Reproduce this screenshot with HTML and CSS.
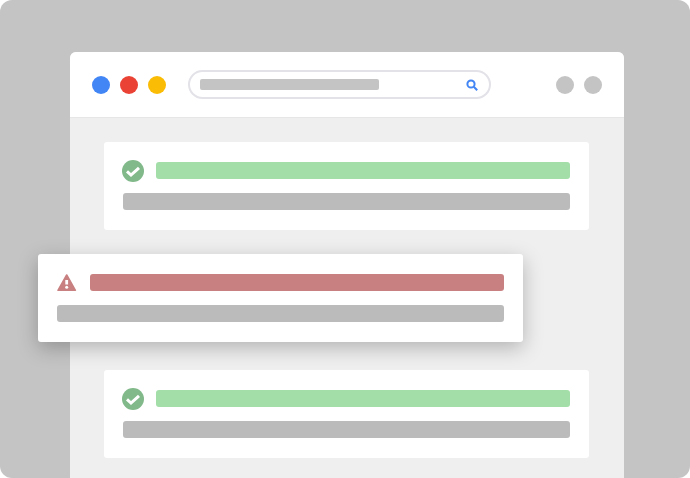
FILE: index.html
```html
<!DOCTYPE html>
<html lang="en">
<head>
    <meta charset="UTF-8">
    <meta name="viewport" content="width=device-width, initial-scale=1.0">
    <title>Browser alerts</title>
    <link rel="stylesheet" href="styles.css">
</head>
<body>
    <div class="browser">
        <div class="toolbar">
            <div class="dots">
                <span class="dot dot-blue"></span>
                <span class="dot dot-red"></span>
                <span class="dot dot-yellow"></span>
            </div>
            <div class="search">
                <span class="search-text"></span>
                <svg class="search-icon" width="12" height="12" viewBox="0 0 12 12" fill="none" stroke="#4285f4">
                    <circle cx="5" cy="5" r="3.6" stroke-width="2"/>
                    <path d="M7.8 7.8 11.2 11.2" stroke-width="2.1"/>
                </svg>
            </div>
            <div class="dots">
                <span class="dot dot-gray"></span>
                <span class="dot dot-gray"></span>
            </div>
        </div>

        <div class="content">
            <div class="card">
                <div class="card-head">
                    <svg class="status-icon" width="22" height="22" viewBox="0 0 22 22">
                        <circle cx="11" cy="11" r="11" fill="#81b98a"/>
                        <path d="M5 11.4 9 15 17 7.8" fill="none" stroke="#fff" stroke-width="3"/>
                    </svg>
                    <span class="bar bar-green"></span>
                </div>
                <span class="bar bar-gray"></span>
            </div>

            <div class="card card-alert">
                <div class="card-head">
                    <svg class="status-icon" width="22" height="22" viewBox="0 0 22 22">
                        <path d="M10.7 3 2 18.3h17.4z" fill="#c88080" stroke="#c88080" stroke-width="1.6" stroke-linejoin="round"/>
                        <path d="M10.7 8v4.6" stroke="#fff" stroke-width="2.8"/>
                        <circle cx="10.7" cy="15.2" r="1.5" fill="#fff"/>
                    </svg>
                    <span class="bar bar-red"></span>
                </div>
                <span class="bar bar-gray"></span>
            </div>

            <div class="card">
                <div class="card-head">
                    <svg class="status-icon" width="22" height="22" viewBox="0 0 22 22">
                        <circle cx="11" cy="11" r="11" fill="#81b98a"/>
                        <path d="M5 11.4 9 15 17 7.8" fill="none" stroke="#fff" stroke-width="3"/>
                    </svg>
                    <span class="bar bar-green"></span>
                </div>
                <span class="bar bar-gray"></span>
            </div>
        </div>
    </div>
</body>
</html>
```

FILE: styles.css
```css
* {
    margin: 0;
    padding: 0;
    box-sizing: border-box;
}

html {
    background: #fff;
}

body {
    width: 690px;
    height: 478px;
    overflow: hidden;
    background: #c4c4c4;
    border-radius: 12px;
    padding: 52px 66px 0 70px;
}

.browser {
    height: 426px;
    background: #efefef;
    border-radius: 6px 6px 0 0;
}

.toolbar {
    height: 66px;
    background: #fff;
    border-bottom: 1px solid #e6e6e6;
    border-radius: 6px 6px 0 0;
    display: flex;
    align-items: center;
    padding: 0 22.4px;
}

.dots {
    display: flex;
    gap: 9.6px;
}

.dot {
    width: 18px;
    height: 18px;
    border-radius: 50%;
}

.dot-blue { background: #4285f4; }
.dot-red { background: #ea4335; }
.dot-yellow { background: #fbbc05; }
.dot-gray { background: #c4c4c4; }

.search {
    width: 303px;
    height: 29px;
    margin: 0 auto 0 22px;
    border: 2px solid #e2e2e8;
    border-radius: 15px;
    display: flex;
    align-items: center;
    justify-content: space-between;
    padding: 0 10.5px;
}

.search-text {
    width: 179px;
    height: 11.3px;
    background: #c4c4c4;
    border-radius: 2px;
}

.content {
    padding: 24px 35px 0 34px;
    display: flex;
    flex-direction: column;
}

.card {
    height: 88px;
    background: #fff;
    border-radius: 3px;
    padding: 18px 19px 0 18px;
    display: flex;
    flex-direction: column;
    gap: 11px;
}

.card-alert {
    margin: 24px 66px 28px -66px;
    box-shadow: 0 6px 20px rgba(0, 0, 0, 0.25);
    position: relative;
}

.card-head {
    display: flex;
    align-items: flex-start;
    gap: 12px;
    height: 22px;
}

.status-icon {
    flex-shrink: 0;
}

.bar {
    display: block;
    height: 17.4px;
    border-radius: 3px;
}

.card-head .bar {
    flex-grow: 1;
    height: 16.7px;
    margin-top: 2px;
}

.bar-green { background: #a3dea9; }
.bar-red { background: #c88080; }
.bar-gray { background: #bbbbbb; margin-left: 1px; }
```
